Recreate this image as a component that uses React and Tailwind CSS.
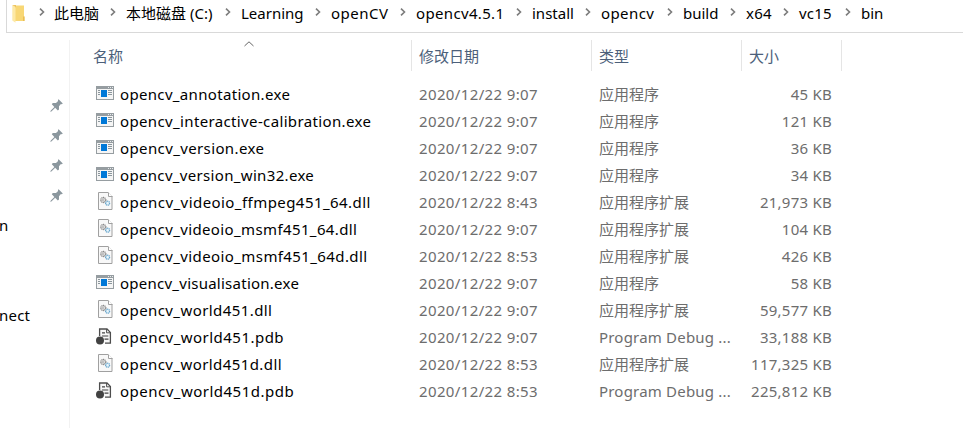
import React from 'react';

const crumbs = [
  ['此电脑', 'w-[72px]', ''],
  ['本地磁盘 (C:)', 'w-[115px]', ''],
  ['Learning', 'w-[90px]', ''],
  ['openCV', 'w-[85px]', 'tracking-[0.5px]'],
  ['opencv4.5.1', 'w-[116px]', 'tracking-[0.34px]'],
  ['install', 'w-[69px]', ''],
  ['opencv', 'w-[82px]', 'tracking-[0.4px]'],
  ['build', 'w-[63px]', ''],
  ['x64', 'w-[53px]', 'tracking-[0.3px]'],
  ['vc15', 'w-[62px]', 'tracking-[0.2px]'],
  ['bin', 'w-[60px]', ''],
];

const files = [
  ['exe', 'opencv_annotation.exe', '2020/12/22 9:07', '应用程序', '45 KB', 'tracking-[0.33px]'],
  ['exe', 'opencv_interactive-calibration.exe', '2020/12/22 9:07', '应用程序', '121 KB', 'tracking-[0.36px]'],
  ['exe', 'opencv_version.exe', '2020/12/22 9:07', '应用程序', '36 KB', 'tracking-[0.38px]'],
  ['exe', 'opencv_version_win32.exe', '2020/12/22 9:07', '应用程序', '34 KB', 'tracking-[0.33px]'],
  ['dll', 'opencv_videoio_ffmpeg451_64.dll', '2020/12/22 8:43', '应用程序扩展', '21,973 KB', 'tracking-[0.44px]'],
  ['dll', 'opencv_videoio_msmf451_64.dll', '2020/12/22 9:07', '应用程序扩展', '104 KB', 'tracking-[0.38px]'],
  ['dll', 'opencv_videoio_msmf451_64d.dll', '2020/12/22 8:53', '应用程序扩展', '426 KB', 'tracking-[0.4px]'],
  ['exe', 'opencv_visualisation.exe', '2020/12/22 9:07', '应用程序', '58 KB', 'tracking-[0.25px]'],
  ['dll', 'opencv_world451.dll', '2020/12/22 9:07', '应用程序扩展', '59,577 KB', 'tracking-[0.42px]'],
  ['pdb', 'opencv_world451.pdb', '2020/12/22 9:07', 'Program Debug ...', '33,188 KB', 'tracking-[0.47px]'],
  ['dll', 'opencv_world451d.dll', '2020/12/22 8:53', '应用程序扩展', '117,325 KB', 'tracking-[0.42px]'],
  ['pdb', 'opencv_world451d.pdb', '2020/12/22 8:53', 'Program Debug ...', '225,812 KB', 'tracking-[0.49px]'],
];

function Chevron() {
  return (
    <svg className="mb-[3px] h-2 w-1.5 shrink-0" viewBox="0 0 6 8" fill="none" stroke="#7c7c7c" strokeWidth="1.6">
      <path d="M1 .6 4.5 4 1 7.4" />
    </svg>
  );
}

function FolderIcon() {
  return (
    <svg className="h-[18px] w-[13px] shrink-0" viewBox="0 0 13 18">
      <path d="M3 .5h9v11h.5V16H3z" fill="#f8d775" />
      <path d="M11 11.5h1.5V16H11z" fill="#e9bd55" />
      <path d="M.3 0 3.5 2.2V17.7L.3 15.5z" fill="#fde9a6" />
      <path d="M.3 0H4v2.4z" fill="#eec45f" />
    </svg>
  );
}

function ExeIcon() {
  return (
    <svg className="h-[14px] w-[18px]" viewBox="0 0 18 14" shapeRendering="crispEdges">
      <path fill="#969da1" d="M0 0h18v14H0z" />
      <path fill="#f5f5f5" d="M1 3h16v10H1z" />
      <path fill="#e9ecee" d="M12 1h1v1h-1zM14 1h1v1h-1zM16 1h1v1h-1z" />
      <path fill="#0078d7" d="M5 4h6v7H5z" />
      <path fill="#8b969c" d="M2 4h2v1H2zM2 6h2v1H2zM2 8h2v1H2zM12 4h4v1h-4zM12 6h4v1h-4zM12 8h4v1h-4z" />
    </svg>
  );
}

function DllIcon() {
  return (
    <svg className="h-[18px] w-[15px]" viewBox="0 0 15 18" fill="none">
      <path d="M.5.5h9.5l4 4v13H.5z" fill="#f8f8f8" stroke="#a0a0a0" />
      <path d="M10.5.5v4h4" fill="#fff" stroke="#a0a0a0" />
      <circle cx="5.3" cy="8" r="2.5" fill="#efefef" stroke="#858585" strokeWidth="1.3" strokeDasharray="1.1 .5" />
      <circle cx="5.3" cy="8" r=".9" stroke="#909090" strokeWidth=".6" />
      <circle cx="9.6" cy="11.2" r="2" fill="#e6f4fb" stroke="#6ba7cc" strokeWidth="1.3" strokeDasharray="1.1 .5" />
    </svg>
  );
}

function PdbIcon() {
  return (
    <svg className="h-[17px] w-[16px]" viewBox="0 0 16 17" fill="none">
      <path d="M3.6 8V1h7.4l3.4 3.4v10.8H9" fill="#f7f7f7" stroke="#4d4d4d" strokeWidth="1.3" />
      <path d="M10.6 1v3.8h3.8" stroke="#4d4d4d" />
      <path d="M6 4.9h3M6 8h6.3M8.5 11.2h4" stroke="#454545" strokeWidth="1.2" />
      <circle cx="4" cy="12.5" r="4" fill="#424242" />
    </svg>
  );
}

const icons = { exe: ExeIcon, dll: DllIcon, pdb: PdbIcon };

function Pin() {
  return (
    <svg className="h-[13px] w-[13px]" viewBox="0 0 13 13" fill="#8b979e">
      <path d="M8.6.2 12.8 4.4 11.8 5.2 10.9 5 9 7.2 9 10.4 7.8 11.4 5.2 8.7 1.4 12.4.2 12.8.8 11.6 4.4 7.9 1.8 5.2 2.8 4 6 4 8.1 2.1 7.9 1z" />
    </svg>
  );
}

export default function App() {
  return (
    <div className="flex h-[428px] w-[963px] flex-col overflow-hidden bg-white font-['Noto_Sans','Noto_Sans_CJK_SC',sans-serif] text-[15px] leading-[27px] whitespace-pre text-black">
      <header className="ml-1.5 flex h-[33px] shrink-0 items-start border-b border-l border-[#d9d9d9] pl-[5px]">
        <div className="flex h-[27px] w-[42px] items-center justify-between pr-[9px]">
          <FolderIcon />
          <Chevron />
        </div>
        {crumbs.map(([label, width, tracking], i) => (
          <div key={label} className={`flex h-[27px] shrink-0 items-center justify-between pr-[10px] ${width}`}>
            <span className={tracking}>{label}</span>
            {i < crumbs.length - 1 && <Chevron />}
          </div>
        ))}
      </header>
      <div className="mt-[7px] flex min-h-0 grow">
        <nav className="flex w-[70px] shrink-0 flex-col border-r border-[#f2f2f2] pt-[59px]">
          <div className="flex flex-col gap-[17px] pl-[50px]">
            <Pin />
            <Pin />
            <Pin />
            <Pin />
          </div>
          <span className="mt-[10px] -ml-px">n</span>
          <span className="mt-[63px] -ml-px tracking-[0.2px]">nect</span>
        </nav>
        <main className="flex grow flex-col">
          <div className="relative flex h-[31px] shrink-0 pl-[23px] leading-[32px] text-[#4c607a]">
            <svg className="absolute top-px left-[174px] h-1.5 w-2.5" viewBox="0 0 10 6" fill="none" stroke="#666">
              <path d="M.5 5 5 .8 9.5 5" />
            </svg>
            <div className="w-[319px] border-r border-[#e5e5e5]">名称</div>
            <div className="w-[180px] border-r border-[#e5e5e5] pl-[7px]">修改日期</div>
            <div className="w-[150px] border-r border-[#e5e5e5] pl-[7px]">类型</div>
            <div className="w-[100px] border-r border-[#e5e5e5] pl-[7px]">大小</div>
          </div>
          <div className="flex flex-col pt-[10px] pl-[26px]">
            {files.map(([kind, name, date, type, size, tracking]) => {
              const Icon = icons[kind];
              return (
                <div key={name} className="flex h-[27px] items-start text-[#6d6d6d]">
                  <div className={`flex w-[24px] ${kind === 'exe' ? 'pt-[5px]' : kind === 'dll' ? 'pt-[3px] pl-0.5' : 'pt-1'}`}>
                    <Icon />
                  </div>
                  <div className={`w-[299px] text-black ${tracking}`}>{name}</div>
                  <div className="w-[180px] tracking-[0.37px]">{date}</div>
                  <div className={`w-[133px] ${kind === 'pdb' ? 'tracking-[0.2px]' : ''}`}>{type}</div>
                  <div className="w-[100px] text-right tracking-[0.25px]">{size}</div>
                </div>
              );
            })}
          </div>
        </main>
      </div>
    </div>
  );
}
